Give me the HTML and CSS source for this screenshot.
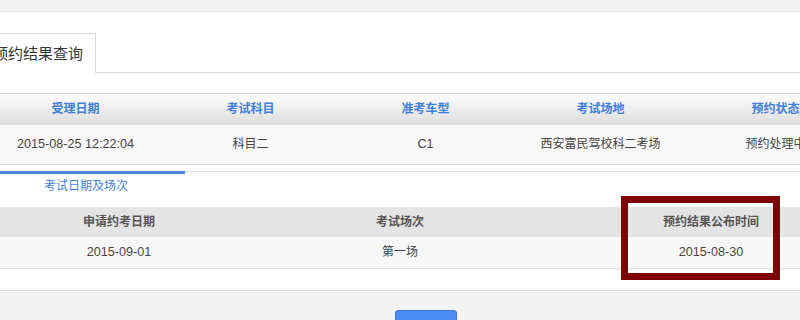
FILE: index.html
```html
<!DOCTYPE html>
<html lang="zh-CN">
<head>
<meta charset="utf-8">
<title>预约结果查询</title>
<link rel="stylesheet" href="styles.css">
</head>
<body>
<div class="page">
  <div class="topbar"></div>
  <div class="tabs">
    <div class="tab">预约结果查询</div>
    <div class="tab-rest"></div>
  </div>

  <div class="grid grid5 head1">
    <div>受理日期</div><div>考试科目</div><div>准考车型</div><div>考试场地</div><div>预约状态</div>
  </div>
  <div class="grid grid5 row1">
    <div class="num">2015-08-25 12:22:04</div><div>科目二</div><div class="num">C1</div><div>西安富民驾校科二考场</div><div>预约处理中</div>
  </div>

  <div class="subtabs">
    <div class="subtab">考试日期及场次</div>
  </div>

  <div class="grid grid3 head2">
    <div>申请约考日期</div><div>考试场次</div><div>预约结果公布时间</div>
  </div>
  <div class="grid grid3 row2">
    <div class="num">2015-09-01</div><div>第一场</div><div class="num">2015-08-30</div>
  </div>

  <div class="footer">
    <div class="btn"></div>
  </div>

  <div class="highlight"></div>
</div>
</body>
</html>
```
FILE: styles.css
```css
html, body {
  margin: 0;
  padding: 0;
  background: #ffffff;
  overflow: hidden;
}
.page {
  position: relative;
  width: 800px;
  height: 320px;
  overflow: hidden;
  font-family: "Liberation Sans", "Noto Sans CJK SC", sans-serif;
  font-size: 12px;
  color: #444;
}
.topbar {
  height: 11px;
  background: #f2f2f2;
  border-bottom: 1px solid #e8e8e8;
}
.tabs {
  display: flex;
  margin-top: 21px;
  height: 40px;
}
.tab {
  margin-left: -20px;
  padding: 0 12px;
  height: 40px;
  line-height: 40px;
  box-sizing: border-box;
  border: 1px solid #d8d8d8;
  border-bottom: none;
  font-size: 15px;
  color: #333;
  background: #fff;
}
.tab-rest {
  flex: 1;
  border-bottom: 1px solid #d8d8d8;
}
.grid {
  display: grid;
  text-align: center;
}
.grid5 {
  grid-template-columns: repeat(5, 175px);
  margin-left: -12px;
  width: 875px;
}
.grid3 {
  grid-template-columns: 238px 324px 298px;
  width: 860px;
}
.head1 {
  margin-top: 20px;
  height: 32px;
  box-sizing: border-box;
  border-top: 1px solid #d4d4d4;
  background: linear-gradient(#fdfdfd, #dcdcdc);
  line-height: 31px;
  color: #3f7fdc;
  font-weight: bold;
}
.row1 {
  height: 40px;
  box-sizing: border-box;
  border-bottom: 1px solid #d8d8d8;
  background: #f8f8f8;
  line-height: 39px;
  color: #444;
}
.num {
  font-size: 12.6px;
}
.subtabs {
  margin-top: 6px;
  border-top: 1px solid #e0e0e0;
  height: 35px;
}
.subtab {
  width: 185px;
  margin-top: -1px;
  border-top: 3px solid #4a86e0;
  box-sizing: border-box;
  padding-left: 44px;
  line-height: 24px;
  color: #3f7fdc;
}
.head2 {
  height: 30px;
  line-height: 30px;
  background: #e4e4e4;
  color: #555;
  font-weight: bold;
}
.row2 {
  height: 32px;
  box-sizing: border-box;
  line-height: 31px;
  border-bottom: 1px solid #d8d8d8;
  background: #f7f7f7;
  color: #444;
}
.footer {
  margin-top: 21px;
  border-top: 1px solid #dcdcdc;
  background: #f3f3f3;
  height: 40px;
  display: flex;
  justify-content: flex-start;
  padding-left: 395px;
  padding-top: 19px;
  box-sizing: border-box;
}
.btn {
  width: 62px;
  height: 30px;
  border-radius: 3px;
  background: #4a8af4;
  border: 1px solid #3b78d8;
  box-sizing: border-box;
}
.highlight {
  position: absolute;
  left: 621px;
  top: 196px;
  width: 159px;
  height: 84px;
  box-sizing: border-box;
  border: 7px solid #7f0000;
}
```
